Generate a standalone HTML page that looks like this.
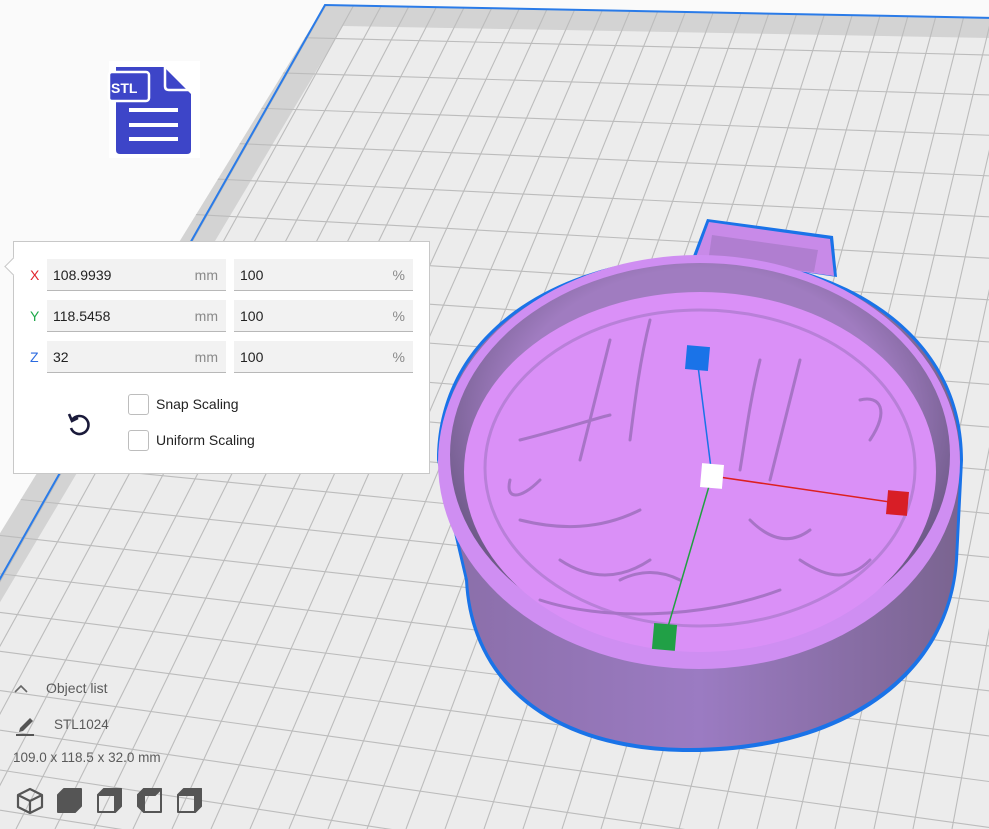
<!DOCTYPE html>
<html><head><meta charset="utf-8"><style>
html,body{margin:0;padding:0;overflow:hidden;}
body{width:989px;height:829px;overflow:hidden;background:#fafafa;position:relative;font-family:"Liberation Sans","DejaVu Sans",sans-serif;}
svg.bg{position:absolute;left:0;top:0;display:block;}
.panel{position:absolute;left:13px;top:241px;width:415px;height:231px;background:#fff;border:1px solid #c8c8c8;}
.panel:before{content:"";position:absolute;left:-7px;top:18px;width:12px;height:12px;background:#fff;border-left:1px solid #c8c8c8;border-bottom:1px solid #c8c8c8;transform:rotate(45deg);}
.lbl{position:absolute;left:16px;font-size:14px;}
.fld{position:absolute;height:31px;background:#f2f2f2;border-bottom:1px solid #b8b8b8;font-size:14px;color:#222;}
.fld span.v{position:absolute;left:6px;top:8px;}
.fld span.u{position:absolute;right:8px;top:8px;color:#8a8a8a;}
.cb{position:absolute;left:114px;width:19px;height:19px;border:1px solid #bdbdbd;border-radius:3px;background:#fff;}
.cbt{position:absolute;left:142px;font-size:14px;color:#222;}
.bl{position:absolute;color:#5a5a5a;font-size:14px;}
</style></head><body>
<svg class="bg" width="989" height="829" viewBox="0 0 989 829">
<defs>
<clipPath id="plate"><polygon points="325,5 1100,20 1100,829 -182,829"/></clipPath>
<radialGradient id="wall" cx="50%" cy="40%" r="55%"><stop offset="70%" stop-color="#a07cc0"/><stop offset="100%" stop-color="#6e5a88"/></radialGradient>
<linearGradient id="side" x1="0" x2="1" y1="0" y2="0"><stop offset="0" stop-color="#8a6ea8"/><stop offset="0.5" stop-color="#9b7bc2"/><stop offset="1" stop-color="#7a6490"/></linearGradient>
</defs>
<polygon points="325,5 1100,20 1100,829 -182,829" fill="#d3d3d3"/>
<polygon points="343,26 1100,40 1100,829 -135,829" fill="#ececec"/>
<g id="grid" clip-path="url(#plate)" stroke="#bcbcbc" stroke-width="1.1"></g>
<polyline points="-182,900 325,5 1100,20" fill="none" stroke="#2a7be8" stroke-width="2"/>
<!-- object -->
<path d="M437,460 C437,330 560,258 699,256 C840,258 963,330 963,460 L958,560 C950,680 840,752 690,752 C560,752 470,690 465,580 Z" fill="#1a73e8"/>
<path d="M440,460 C440,332 562,261 699,259 C838,261 960,332 960,460 L955,560 C947,676 838,748 690,748 C562,748 474,688 468,580 Z" fill="url(#side)"/>
<polygon points="693,256 707,219 833,236 837,277" fill="#1a73e8"/>
<polygon points="696,257 709,222 830,239 834,276" fill="#c88ae8"/>
<polygon points="712,235 818,250 814,272 708,262" fill="#b07ed0"/>
<ellipse cx="699" cy="462" rx="261" ry="207" fill="#cf8ef2"/>
<ellipse cx="700" cy="455" rx="250" ry="192" fill="url(#wall)"/>
<ellipse cx="700" cy="472" rx="236" ry="180" fill="#da90f7"/>
<ellipse cx="700" cy="468" rx="215" ry="158" fill="none" stroke="#b880d8" stroke-width="3"/>
<g fill="none" stroke="#a774c6" stroke-width="3" stroke-linecap="round">
<path d="M610,340 C600,380 590,420 580,460"/><path d="M650,320 C640,360 635,400 630,440"/>
<path d="M520,440 C560,430 590,420 610,415"/><path d="M540,480 C520,500 505,500 510,480"/>
<path d="M760,360 C750,400 745,440 740,470"/><path d="M800,360 C790,400 780,440 770,480"/>
<path d="M860,400 C880,395 890,410 870,440"/><path d="M520,520 C560,530 600,530 640,510"/>
<path d="M750,520 C770,540 790,545 810,530"/><path d="M560,560 C590,580 620,580 650,560"/>
<path d="M800,560 C830,580 850,580 870,560"/><path d="M620,580 C640,570 660,570 680,580"/>
<path d="M540,600 C600,620 700,620 780,590"/>
</g>
<!-- gizmo -->
<line x1="697" y1="358" x2="712" y2="476" stroke="#1a73e8" stroke-width="1.5"/>
<line x1="712" y1="476" x2="897" y2="503" stroke="#dd2020" stroke-width="1.5"/>
<line x1="712" y1="476" x2="665" y2="637" stroke="#20a040" stroke-width="1.5"/>
<rect x="686" y="346" width="23" height="24" fill="#1a73e8" transform="rotate(5 697 358)"/>
<rect x="701" y="464" width="22" height="24" fill="#ffffff" transform="rotate(5 712 476)"/>
<rect x="887" y="491" width="21" height="24" fill="#d81e26" transform="rotate(5 897 503)"/>
<rect x="653" y="624" width="23" height="26" fill="#21a046" transform="rotate(5 665 637)"/>
<!-- STL icon -->
<rect x="109" y="61" width="91" height="97" fill="#fff"/>
<path d="M116,67 L164,67 L191,94 L191,150 Q191,154 187,154 L120,154 Q116,154 116,150 Z" fill="#3d45c8"/>
<path d="M165,65 L165,86 Q165,90 169,90 L191,90" fill="none" stroke="#fff" stroke-width="2.5"/>
<rect x="109" y="72" width="40" height="29" rx="3" fill="#3d45c8" stroke="#fff" stroke-width="2.5"/>
<text x="111" y="93" font-family="Liberation Sans" font-weight="bold" font-size="14" fill="#fff">STL</text>
<rect x="129" y="108" width="49" height="4" fill="#fff"/><rect x="129" y="123" width="49" height="4" fill="#fff"/><rect x="129" y="137" width="49" height="4" fill="#fff"/>
<!-- bottom icons -->
<g fill="none" stroke="#555" stroke-width="2.2" stroke-linejoin="round">
<path d="M18,795 L30,789 L42,795 L42,807 L30,813 L18,807 Z M18,795 L30,801 L42,795 M30,801 L30,813"/>
</g>
<g fill="#555" stroke="#555" stroke-width="2" stroke-linejoin="round">
<path d="M58,795 L64,789 L81,789 L81,806 L75,812 L58,812 Z"/>
<path d="M98,795 L104,789 L121,789 L121,806 L115,812 L98,812 Z" fill="none"/><path d="M98,795 L104,789 L121,789 L115,795 Z"/><path d="M115,795 L121,789 L121,806 L115,812 Z"/>
<path d="M138,795 L144,789 L161,789 L161,812 L144,812 L138,806 Z" fill="none"/><path d="M138,795 L144,789 L144,812 L138,806 Z"/><path d="M138,795 L144,789 L161,789 L155,795 Z"/>
<path d="M178,795 L184,789 L201,789 L201,806 L195,812 L178,812 Z" fill="none"/><path d="M195,795 L201,789 L201,806 L195,812 Z"/><path d="M178,795 L184,789 L201,789 L195,795 Z"/>
</g>
<path d="M15,692 L21,686 L27,692" fill="none" stroke="#666" stroke-width="1.6"/>
<path d="M20,728 L30,718 L33,721 L23,731 L19,732 Z" fill="#555"/><rect x="16" y="734" width="18" height="2" fill="#555"/>
</svg>
<script>
(function(){
var g=document.getElementById('grid'),ns='http://www.w3.org/2000/svg';
function L(x1,y1,x2,y2){var l=document.createElementNS(ns,'line');l.setAttribute('x1',x1);l.setAttribute('y1',y1);l.setAttribute('x2',x2);l.setAttribute('y2',y2);g.appendChild(l);}
var vx=1491,vy=-2055;
for(var i=-30;i<45;i++){var bx=-140+i*39;L(vx,vy,bx,829);}
var hx=-5846,hy=-118;
for(var j=0;j<40;j++){var y=30+j*34+j*j*0.15;var s=(y-hy)/(0-hx);L(0,y,1100,y+s*1100);}
})();
</script>
<div class="panel">
<div class="lbl" style="top:25px;color:#e0242c">X</div>
<div class="lbl" style="top:66px;color:#1fa94a">Y</div>
<div class="lbl" style="top:107px;color:#2c6be0">Z</div>
<div class="fld" style="left:33px;top:17px;width:179px"><span class="v">108.9939</span><span class="u">mm</span></div>
<div class="fld" style="left:220px;top:17px;width:179px"><span class="v">100</span><span class="u">%</span></div>
<div class="fld" style="left:33px;top:58px;width:179px"><span class="v">118.5458</span><span class="u">mm</span></div>
<div class="fld" style="left:220px;top:58px;width:179px"><span class="v">100</span><span class="u">%</span></div>
<div class="fld" style="left:33px;top:99px;width:179px"><span class="v">32</span><span class="u">mm</span></div>
<div class="fld" style="left:220px;top:99px;width:179px"><span class="v">100</span><span class="u">%</span></div>
<div class="cb" style="top:152px"></div><div class="cbt" style="top:154px">Snap Scaling</div>
<div class="cb" style="top:188px"></div><div class="cbt" style="top:190px">Uniform Scaling</div>
<svg style="position:absolute;left:52px;top:168px" width="26" height="28" viewBox="0 0 26 28"><path d="M6,10 A9,9 0 1 1 5,18" fill="none" stroke="#1a1a3a" stroke-width="2.6"/><path d="M3,4 L6,11 L12,8" fill="none" stroke="#1a1a3a" stroke-width="2.6"/></svg>
</div>
<div class="bl" style="left:46px;top:680px">Object list</div>
<div class="bl" style="left:54px;top:717px;font-size:13.5px">STL1024</div>
<div class="bl" style="left:13px;top:750px;font-size:13.5px">109.0 x 118.5 x 32.0 mm</div>
</body></html>
